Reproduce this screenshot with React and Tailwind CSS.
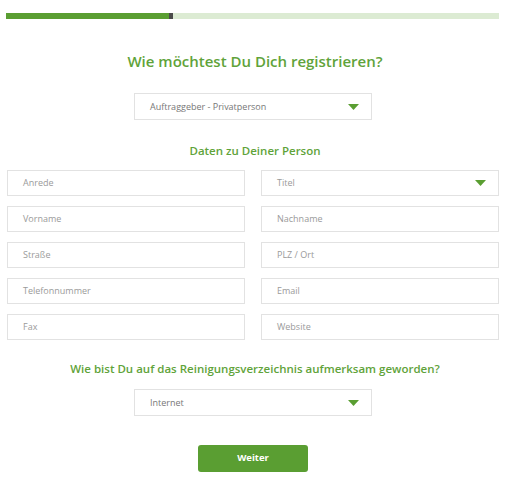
import React from 'react'

const Arrow = () => (
  <svg width="11" height="6" viewBox="0 0 11 6" className="shrink-0">
    <path d="M0 0 L11 0 L5.5 6 Z" fill="#5a9e32" />
  </svg>
)

const Field = ({ label, select }) => (
  <div className="h-[26px] border border-[#e2e2e2] bg-white flex items-center justify-between pl-[15px] pr-[12px] text-[9px] text-[#9a9a9a]">
    <span>{label}</span>
    {select && <Arrow />}
  </div>
)

const fields = [
  ['Anrede', false],
  ['Titel', true],
  ['Vorname', false],
  ['Nachname', false],
  ['Straße', false],
  ['PLZ / Ort', false],
  ['Telefonnummer', false],
  ['Email', false],
  ['Fax', false],
  ['Website', false],
]

export default function App() {
  return (
    <div className="w-[510px] h-[480px] bg-white overflow-hidden" style={{ fontFamily: '"Open Sans", sans-serif' }}>
      {/* progress */}
      <div className="mx-[6px] mt-[13px] w-[493px] h-[6px] flex bg-[#dcebd3]">
        <div className="w-[163px] h-full bg-[#5a9e32]" />
        <div className="w-[4px] h-full bg-[#4a4a4a]" />
      </div>

      <h1 className="mt-[32px] text-center text-[15px] font-semibold text-[#5fa33a] leading-[20px]">
        Wie möchtest Du Dich registrieren?
      </h1>

      <div className="mt-[22px] ml-[134px] w-[238px] h-[27px] border border-[#e2e2e2] flex items-center justify-between pl-[15px] pr-[12px] text-[9px] text-[#777]">
        <span>Auftraggeber - Privatperson</span>
        <Arrow />
      </div>

      <h2 className="mt-[24px] text-center text-[11.5px] font-semibold text-[#5fa33a] leading-[14px]">
        Daten zu Deiner Person
      </h2>

      <div className="mt-[12px] mx-[7px] grid grid-cols-[238px_238px] gap-x-[16px] gap-y-[10px]">
        {fields.map(([label, select]) => (
          <Field key={label} label={label} select={select} />
        ))}
      </div>

      <h2 className="mt-[22px] text-center text-[11.5px] font-semibold text-[#5fa33a] leading-[14px]">
        Wie bist Du auf das Reinigungsverzeichnis aufmerksam geworden?
      </h2>

      <div className="mt-[13px] ml-[134px] w-[238px] h-[27px] border border-[#e2e2e2] flex items-center justify-between pl-[15px] pr-[12px] text-[9px] text-[#777]">
        <span>Internet</span>
        <Arrow />
      </div>

      <div className="mt-[29px] flex justify-center">
        <button className="w-[110px] h-[27px] rounded-[3px] bg-[#5a9e32] text-white text-[9.5px] font-bold ml-[-4px]">
          Weiter
        </button>
      </div>
    </div>
  )
}
